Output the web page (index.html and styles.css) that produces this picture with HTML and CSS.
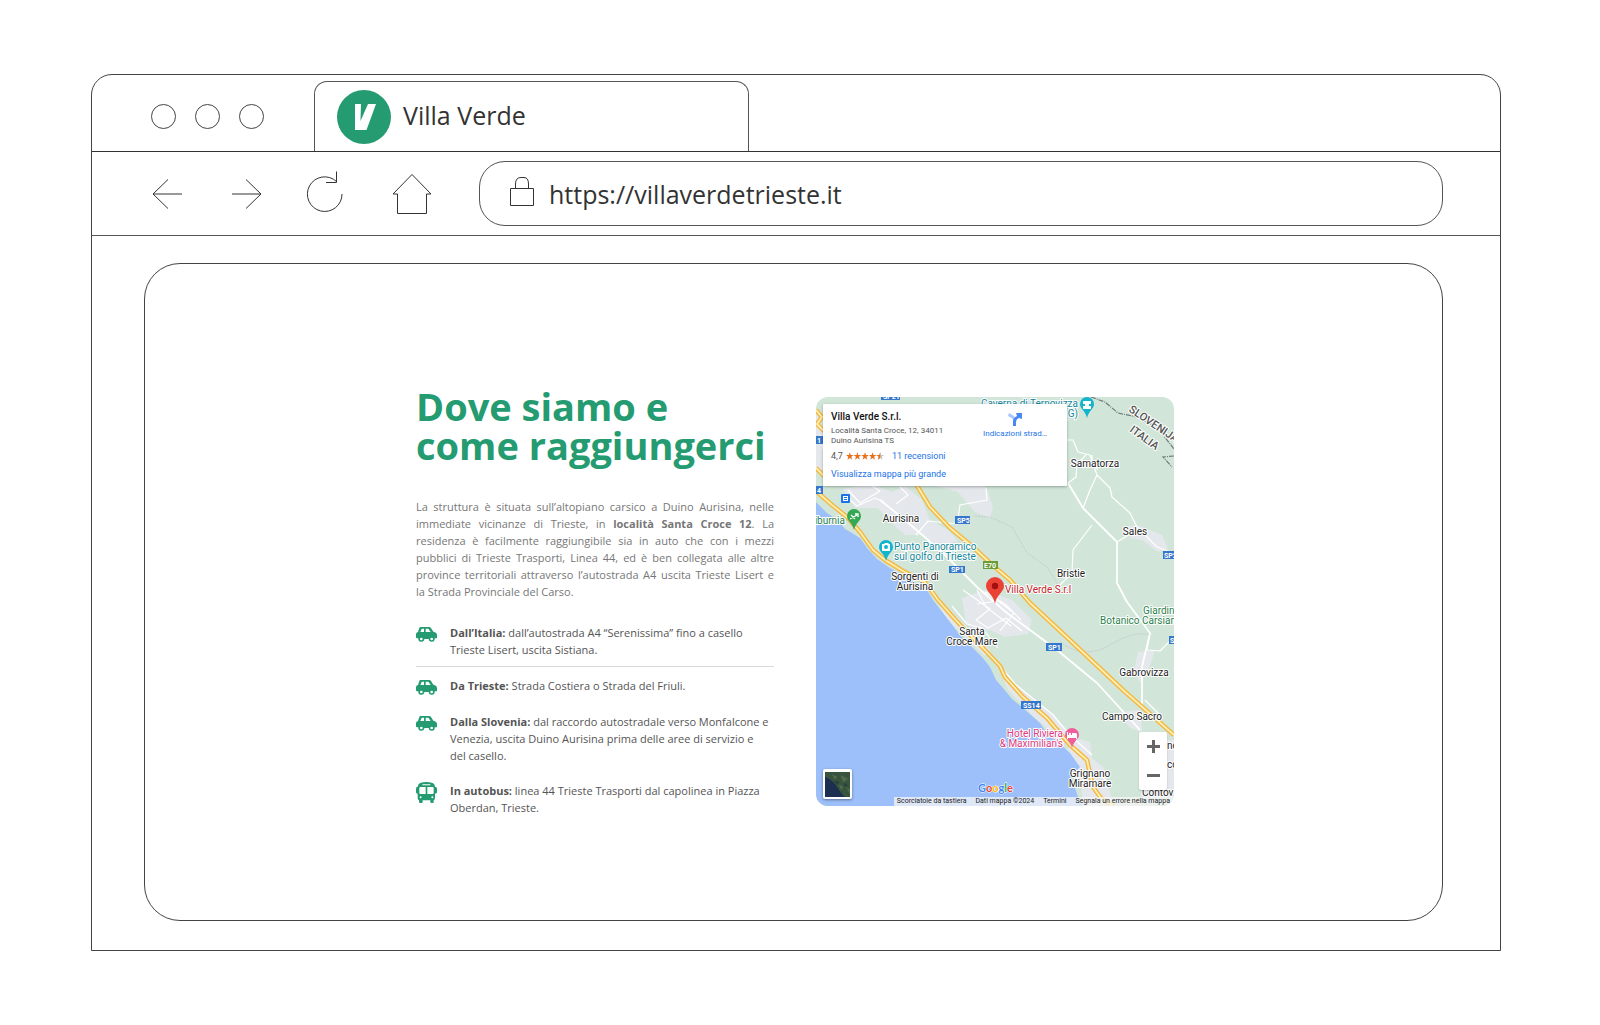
FILE: index.html
```html
<!DOCTYPE html>
<html lang="it">
<head>
<meta charset="utf-8">
<meta name="viewport" content="width=device-width, initial-scale=1">
<title>Villa Verde</title>
<link rel="stylesheet" href="styles.css">
</head>
<body>
<svg class="sprite" aria-hidden="true">
  <symbol id="car" viewBox="0 0 63 45">
    <path fill="#249b70" fill-rule="evenodd" d="M13 0H40Q43 0 45 3L52 14Q63 16 63 24V32Q63 34 60 34H56A9 9 0 1 1 38 36H25A9 9 0 1 1 7 34H3Q0 34 0 31V22Q0 16 6 15L10 3Q11 0 13 0ZM17 5L13 15H24V5ZM29 5V15H44L37 5Z"/>
    <circle cx="16" cy="36" r="4" fill="#fff"/><circle cx="47" cy="36" r="4" fill="#fff"/>
  </symbol>
  <symbol id="bus" viewBox="0 0 63 63">
    <path fill="#249b70" fill-rule="evenodd" d="M12 3Q31-3 50 3Q57 6 57 14Q63 14 63 20V31Q63 35 57 35V48Q57 54 53 55V60Q53 63 50 63H46Q43 63 43 60V55H20V60Q20 63 17 63H12Q9 63 9 60V55Q5 53 5 48V35Q0 35 0 31V20Q0 14 5 14Q6 6 12 3ZM19 7V10H43V7ZM13 15Q10 15 10 18V33Q10 36 13 36H29V15ZM34 15V36H50Q53 36 53 33V18Q53 15 50 15ZM14 43A3 3 0 1 0 14 49A3 3 0 1 0 14 43ZM49 43A3 3 0 1 0 49 49A3 3 0 1 0 49 43Z"/>
  </symbol>
</svg>

<div class="window">
  <header class="tabs">
    <div class="dots"><span class="dot"></span><span class="dot"></span><span class="dot"></span></div>
    <div class="tab">
      <svg class="favicon" viewBox="0 0 54 54" aria-hidden="true"><circle cx="27" cy="27" r="27" fill="#249b70"/><path fill="#fff" d="M18 14H24L23.500 31L31 14H39L29.500 40H18Z"/></svg>
      <span>Villa Verde</span>
    </div>
  </header>

  <nav class="toolbar" aria-label="Navigazione">
    <button class="nav" type="button" aria-label="Indietro"><svg viewBox="0 0 40 48"><path d="M35 24H6M21 9.500L6 24L21 38.500"/></svg></button>
    <button class="nav" type="button" aria-label="Avanti"><svg viewBox="0 0 40 48"><path d="M6 24H35M20 9.500L35 24L20 38.500"/></svg></button>
    <button class="nav" type="button" aria-label="Ricarica"><svg viewBox="0 0 40 48"><path d="M37 24A17.300 17.300 0 1 1 31.500 11.500M31.500 1.500V12.500H21"/></svg></button>
    <button class="nav home" type="button" aria-label="Pagina iniziale"><svg viewBox="0 0 40 48"><path d="M20 4.500L39 24H34.500V43.500H5.500V24H1Z"/></svg></button>
    <label class="address">
      <svg class="lock" viewBox="0 0 26 30" aria-hidden="true"><path d="M1.500 11.500H24.500V28.500H1.500ZM6.500 11V7Q6.500 0.500 12 0.500H15Q19.500 0.500 19.500 7V11"/></svg>
      <input type="text" value="https://villaverdetrieste.it" aria-label="Indirizzo">
    </label>
  </nav>

  <main class="viewport">
    <section class="panel">
      <div class="content">
        <article class="info">
          <h1>Dove siamo e<br>come raggiungerci</h1>
          <p class="intro">La struttura è situata sull’altopiano carsico a Duino Aurisina, nelle<br>immediate vicinanze di Trieste, in <strong>località Santa Croce 12</strong>. La<br>residenza è facilmente raggiungibile sia in auto che con i mezzi<br>pubblici di Trieste Trasporti, Linea 44, ed è ben collegata alle altre<br>province territoriali attraverso l’autostrada A4 uscita Trieste Lisert e<span class="last">la Strada Provinciale del Carso.</span></p>
          <ul class="routes">
            <li class="ruled"><svg class="ico"><use href="#car"/></svg><p><strong>Dall’Italia:</strong> dall’autostrada A4 “Serenissima” fino a casello<br>Trieste Lisert, uscita Sistiana.</p></li>
            <li><svg class="ico"><use href="#car"/></svg><p><strong>Da Trieste:</strong> Strada Costiera o Strada del Friuli.</p></li>
            <li><svg class="ico"><use href="#car"/></svg><p><strong>Dalla Slovenia:</strong> dal raccordo autostradale verso Monfalcone e<br>Venezia, uscita Duino Aurisina prima delle aree di servizio e<br>del casello.</p></li>
            <li><svg class="ico bus"><use href="#bus"/></svg><p><strong>In autobus:</strong> linea 44 Trieste Trasporti dal capolinea in Piazza<br>Oberdan, Trieste.</p></li>
          </ul>
        </article>

        <div class="map">
          <svg class="canvas" viewBox="816 397 358 409" preserveAspectRatio="xMidYMid slice" role="img" aria-label="Mappa di Santa Croce">
            <rect x="816" y="397" width="358" height="410" fill="#d1e6d9"/>
            <!-- built-up areas -->
            <g fill="#e4e7eb">
              <path d="M843 489L872 484L892 492L905 486L922 500L930 520L948 530L958 541L940 546L920 535L905 535L890 522L878 508L855 508Z"/>
              <path d="M930 484H985L993 507L990 518L975 512L958 492Z"/>
              <path d="M816 412L822 424L832 470L816 470Z"/>
              <path d="M962 598L985 590L1012 600L1032 620L1028 634L1005 637L990 630L975 632L966 622Z"/>
              <path d="M936 600L950 610L972 632L990 650L985 656L962 634L946 618Z"/>
              <path d="M1128 526L1140 526L1162 535L1168 549L1158 552L1142 540L1130 538Z"/>
              <path d="M1138 652L1155 650L1148 672L1140 682L1134 670Z"/>
              <path d="M1118 712L1140 710L1142 732L1130 728Z"/>
              <path d="M1074 738L1090 742L1092 758L1104 768L1112 800L1098 806H1084L1078 770L1066 752Z"/>
              <path d="M1000 670L1015 685L1055 715L1075 742L1062 740L1035 718L1008 690Z"/>
              <path d="M1166 740H1174V797H1140L1150 760Z"/>
            </g>
            <!-- sea -->
            <path fill="#9dc0fa" d="M816 502L827 513L838 520L845 529L852 533L860 538L868 549L877 559L890 568L907 577L927 590L933 600L950 622L960 635L973 648L982 657L990 667L996 680L1003 688L1012 699L1023 708L1040 723L1048 735L1057 741L1070 753L1080 767L1071 776L1078 797L1084 807H816Z"/>
            <!-- minor roads -->
            <g fill="none" stroke="#fff" stroke-width="1.200" stroke-linejoin="round">
              <path d="M1068 483L1083 508L1117 542L1117 583L1127 602L1150 633L1142 667V706" stroke-width="1.800"/>
              <path d="M880 500L900 516L920 533L943 553L977 587L1007 613L1057 650L1097 683L1140 730" stroke-width="1.800"/>
              <path d="M1067 440H1073L1078 452L1090 455L1097 475L1090 490L1083 508M1097 475L1110 488L1112 497L1130 513L1137 527L1157 547L1173 553M1117 542L1132 533M1092 525L1073 550L1072 573L1058 587M1086 455L1077 464L1076 477L1068 483M1092 455V461L1098 470M1150 633L1147 650L1160 651L1174 637"/>
              <path d="M843 494L857 506L875 498L884 502M848 490L860 503L880 491L872 486M900 487L908 495L896 504M916 535L928 521L957 524L960 505L987 500L986 488"/>
              <path d="M952 606L967 624L982 628L998 648M963 590L990 609L976 620L988 628L1006 618L1022 631M985 592L1005 604L1021 620M977 604L998 601L1014 613L1000 631M977 590L986 607L1011 626M820 415L832 434M820 435L826 462M995 660L1015 684L1052 714L1070 735L1092 755M1148 748L1165 764L1160 780M1096 770L1108 783M1145 700L1160 715"/>
            </g>
            <path fill="none" stroke="#c6ccd0" stroke-dasharray="2 1" d="M975 516L990 517L1012 527L1027 553L1047 567L1058 585M1060 642Q1085 660 1110 645T1150 635"/>
            <!-- highways -->
            <g fill="none" stroke-linejoin="round">
              <g stroke="#f4b63c" stroke-width="4.500">
                <path d="M816 491L832 505L847 517L860 532L873 550L885 560L903 571L925 582L938 600L953 617L965 630L983 648L1000 666L1005 677L1023 697L1047 718L1070 745L1087 760L1093 787L1101 798L1114 807"/>
                <path d="M916 484L930 507L950 528L973 547L990 563L1010 580L1030 603L1073 643L1123 690L1174 735M816 410L822 417L817 424L828 435M816 468L826 478"/>
              </g>
              <g stroke="#fdeeb4" stroke-width="1.800">
                <path d="M816 491L832 505L847 517L860 532L873 550L885 560L903 571L925 582L938 600L953 617L965 630L983 648L1000 666L1005 677L1023 697L1047 718L1070 745L1087 760L1093 787L1101 798L1114 807"/>
                <path d="M916 484L930 507L950 528L973 547L990 563L1010 580L1030 603L1073 643L1123 690L1174 735M816 410L822 417L817 424L828 435M816 468L826 478"/>
              </g>
            </g>
            <!-- border -->
            <path fill="none" stroke="#6f7c78" stroke-width="1.200" stroke-dasharray="5 1 1 1" d="M1091 397L1105 402L1118 413L1137 417L1157 427L1174 449M1174 456L1163 457L1172 467"/>
            <!-- road shields -->
            <g class="shields">
              <g fill="#3577cc"><rect x="881" y="394" width="19" height="6"/><rect x="816" y="436" width="7" height="8"/><rect x="816" y="486" width="7" height="8"/><rect x="955" y="516" width="15" height="8"/><rect x="949" y="566" width="16" height="7"/><rect x="1046" y="643" width="16" height="8"/><rect x="1021" y="701" width="20" height="8"/><rect x="1163" y="551" width="12" height="8"/><rect x="1169" y="636" width="6" height="8"/></g>
              <rect x="841" y="494" width="9" height="9" rx="1" fill="#1a73e8"/><path stroke="#fff" fill="none" d="M843 496.500H848M843.500 496V501M843 498.500H848M843 500.500H848M847.500 496V501"/>
              <rect x="983" y="561" width="15" height="8" fill="#699b38"/>
              <text x="883" y="399">SP21</text><text x="817" y="443">1</text><text x="817" y="493">4</text><text x="957" y="523">SP5</text><text x="951" y="572">SP1</text><text x="1048" y="650">SP1</text><text x="1023" y="708">SS14</text><text x="1164" y="558">SP2</text><text x="1170" y="643">S</text><text x="984" y="568">E70</text>
            </g>
            <!-- pins -->
            <g>
              <path fill="#34a853" d="M854 530C852 522 847 521 847 516A7 7 0 0 1 861 516C861 521 856 522 854 530Z"/><path stroke="#fff" stroke-width="1.300" fill="none" d="M850 519L857 515M851 515L855 519M855 514H858V517"/>
              <path fill="#12b5cb" d="M886 561C884 553 879 552 879 547A7 7 0 0 1 893 547C893 552 888 553 886 561Z"/><path fill="#fff" fill-rule="evenodd" d="M882 544H884L885 543H888L889 544H890V551H882ZM886 545A2 2 0 1 0 886 549A2 2 0 1 0 886 545Z"/>
              <path fill="#12b5cb" d="M1087 418C1085 410 1080 409 1080 404A7 7 0 0 1 1094 404C1094 409 1089 410 1087 418Z"/><path fill="#fff" d="M1083 401H1091V404H1089V406H1091V409H1083V406H1085V404H1083Z"/>
              <path fill="#ef5f99" d="M1072 748C1070 740 1065 739 1065 735A7 7 0 0 1 1079 735C1079 739 1074 740 1072 748Z"/><path fill="#fff" d="M1067 732H1068V735H1069V733H1071V735H1072V733H1076L1077 734V739H1076V738H1068V739H1067Z"/>
              <path fill="#ea4335" d="M995 604C994 595 986 592 986 586A9 9 0 0 1 1004 586C1004 592 996 595 995 604Z"/><circle cx="995" cy="586" r="3.200" fill="#a50e0e"/>
            </g>
            <!-- place names -->
            <g class="places">
              <text x="901" y="522" text-anchor="middle">Aurisina</text>
              <text x="915" y="580" text-anchor="middle">Sorgenti di</text><text x="915" y="590" text-anchor="middle">Aurisina</text>
              <text x="972" y="635" text-anchor="middle">Santa</text><text x="972" y="645" text-anchor="middle">Croce Mare</text>
              <text x="1095" y="467" text-anchor="middle">Samatorza</text>
              <text x="1135" y="535" text-anchor="middle">Sales</text>
              <text x="1071" y="577" text-anchor="middle">Bristie</text>
              <text x="1144" y="676" text-anchor="middle">Gabrovizza</text>
              <text x="1132" y="720" text-anchor="middle">Campo Sacro</text>
              <text x="1090" y="777" text-anchor="middle">Grignano</text><text x="1090" y="787" text-anchor="middle">Miramare</text>
              <text x="1167" y="749">no</text><text x="1167" y="768">co</text><text x="1142" y="796">Contov</text>
              <g class="teal"><text x="894" y="550">Punto Panoramico</text><text x="894" y="560">sul golfo di Trieste</text><text x="1078" y="407" text-anchor="end">Caverna di Ternovizza</text><text x="1078" y="417" text-anchor="end">(G)</text></g>
              <g class="green"><text x="845" y="524" text-anchor="end">Liburnia</text><text x="1143" y="614">Giardin</text><text x="1100" y="624">Botanico Carsian</text></g>
              <g class="pink"><text x="1063" y="737" text-anchor="end">Hotel Riviera</text><text x="1063" y="747" text-anchor="end">&amp; Maximilian's</text></g>
              <text class="red" x="1005" y="593">Villa Verde S.r.l</text>
              <g class="country"><text transform="translate(1128 411) rotate(34)">SLOVENIJA</text><text transform="translate(1129 431) rotate(36)">ITALIA</text></g>
            </g>
            <text class="google" x="978" y="792"><tspan fill="#4285f4">G</tspan><tspan fill="#ea4335">o</tspan><tspan fill="#fbbc04">o</tspan><tspan fill="#4285f4">g</tspan><tspan fill="#34a853">l</tspan><tspan fill="#ea4335">e</tspan></text>
          </svg>

          <div class="card">
            <div class="place">
              <h2>Villa Verde S.r.l.</h2>
              <p>Località Santa Croce, 12, 34011<br>Duino Aurisina TS</p>
              <div class="rating"><span>4,7</span>
                <svg class="stars" viewBox="0 0 40 8" aria-hidden="true"><defs><path id="star" d="M4 0L5 3H8L5.600 4.800L6.500 8L4 6L1.500 8L2.400 4.800L0 3H3Z"/></defs><g fill="#e7711b"><use href="#star"/><use href="#star" x="8"/><use href="#star" x="16"/><use href="#star" x="24"/></g><use href="#star" x="32" fill="#c4c4c4"/><path fill="#e7711b" d="M36 0V6L33.500 8L34.400 4.800L32 3H35Z"/></svg>
                <a href="#recensioni">11 recensioni</a></div>
              <a href="#mappa">Visualizza mappa più grande</a>
            </div>
            <a class="directions" href="#indicazioni">
              <svg viewBox="0 0 14 14" aria-hidden="true"><path fill="#a8c7fa" d="M1 1L6 4L8 8L6 9Q6 7 0 4Z"/><path fill="#4a89f3" d="M5 14V9Q5 6 9 4L8 1H14V7L11 6Q8 7 8 10V14Z"/></svg>
              <span>Indicazioni strad…</span>
            </a>
          </div>
          <button class="satellite" type="button" aria-label="Satellite"><svg viewBox="0 0 26 26"><path fill="#38533e" d="M0 0H26V26H0Z"/><path fill="#52694b" d="M7 2L13 5L10 8ZM16 3L24 7L19 11ZM14 13L19 15L17 19ZM22 16L26 18V23Z"/><path fill="#273f39" d="M9 9L15 10L13 13ZM20 11L24 14L20 15Z"/><path fill="#1d2f50" d="M0 5Q9 9 13 16T21 26H0Z"/></svg></button>
          <div class="zoom"><button type="button" aria-label="Zoom avanti"><svg viewBox="0 0 13 13"><path d="M0 6.500H13M6.500 0V13"/></svg></button><button type="button" aria-label="Zoom indietro"><svg viewBox="0 0 13 13"><path d="M0 6.500H13"/></svg></button></div>
          <footer class="credits"><button type="button">Scorciatoie da tastiera</button><span>Dati mappa ©2024</span><a href="#termini">Termini</a><a href="#errore">Segnala un errore nella mappa</a></footer>
        </div>
      </div>
    </section>
  </main>
</div>
</body>
</html>
```
FILE: styles.css
```css
* { box-sizing: border-box; }
body {
  margin: 0;
  min-height: 100vh;
  padding: 74px 99px 74px 91px;
  display: flex;
  background: #fff;
  color: #333;
  font-family: "Open Sans", sans-serif;
}
button { border: 0; padding: 0; background: none; font: inherit; color: inherit; }
a { color: #1a73e8; text-decoration: none; }
h1, h2, p, ul { margin: 0; padding: 0; }
svg { display: block; }
.sprite { position: absolute; width: 0; height: 0; }

.window {
  flex: 1;
  display: flex;
  flex-direction: column;
  border: 1px solid #444;
  border-radius: 21px 21px 0 0;
}
.tabs {
  display: flex;
  align-items: flex-end;
  height: 77px;
  padding-left: 59px;
  border-bottom: 1px solid #333;
}
.dots { display: flex; gap: 19px; padding-bottom: 22px; width: 163px; }
.dot { width: 25px; height: 25px; border: 1px solid #444; border-radius: 50%; }
.tab {
  display: flex;
  align-items: center;
  gap: 12px;
  width: 435px;
  height: 70px;
  padding-left: 22px;
  border: 1px solid #555;
  border-bottom: 0;
  border-radius: 13px 13px 0 0;
  font-size: 25px;
  line-height: 32px;
}
.tab span { padding-bottom: 3px; }
.favicon { width: 54px; height: 54px; }

.toolbar {
  display: flex;
  align-items: center;
  gap: 39px;
  height: 84px;
  padding: 0 57px 0 55px;
  border-bottom: 1px solid #555;
}
.nav { width: 40px; height: 48px; }
.nav svg, .lock { fill: none; stroke: #333; stroke-width: 1; }
.home { margin: 0 8px; }
.address {
  flex: 1;
  display: flex;
  align-items: center;
  gap: 14px;
  height: 65px;
  padding: 0 29px;
  border: 1px solid #555;
  border-radius: 26px;
}
.lock { width: 26px; height: 30px; margin-bottom: 4px; }
.address input {
  flex: 1;
  min-width: 0;
  border: 0;
  padding: 0;
  outline: 0;
  background: none;
  color: #333;
  font: 25px "Open Sans", sans-serif;
}

.viewport { flex: 1; display: flex; padding: 27px 57px 29px 52px; }
.panel {
  flex: 1;
  padding: 123px 24px 80px 27px;
  border: 1px solid #444;
  border-radius: 36px;
}
.content {
  display: grid;
  grid-template-columns: 1fr 1fr;
  gap: 42px;
  max-width: 758px;
  margin: 0 auto;
}
h1 { color: #249b70; font-size: 38px; line-height: 39px; font-weight: 700; }
.intro {
  margin-top: 33px;
  color: #777;
  font-size: 11px;
  line-height: 17px;
  text-align: justify;
  text-align-last: justify;
}
.last { display: block; text-align-last: left; }
.routes { margin-top: 24px; list-style: none; color: #555; font-size: 11px; line-height: 17px; }
.routes li { display: flex; gap: 13px; margin-bottom: 18px; }
.routes .ruled { padding-bottom: 8px; margin-bottom: 10px; border-bottom: 1px solid #d9d9d9; }
.ico { flex: none; width: 21px; height: 15px; margin-top: 3px; }
.bus { height: 21px; margin-top: 0; }

.map {
  position: relative;
  height: 409px;
  margin-top: 10px;
  border-radius: 12px;
  overflow: hidden;
  font-family: Roboto, sans-serif;
}
.canvas { width: 100%; height: 100%; }
.shields text { fill: #fff; font: 700 7px Roboto, sans-serif; }
.places { fill: #222; font-size: 10px; stroke: #fff; stroke-width: 2px; stroke-linejoin: round; paint-order: stroke; }
.teal { fill: #12879a; }
.green { fill: #2a7f4c; }
.pink { fill: #e0387c; }
.red { fill: #c5221f; }
.country { fill: #555; font-size: 11px; font-weight: 500; }
.google { font: 700 11px Lato, sans-serif; stroke: #fff; stroke-width: 1px; paint-order: stroke; }

.card {
  position: absolute;
  top: 7px;
  left: 7px;
  display: flex;
  justify-content: space-between;
  width: 244px;
  height: 82px;
  padding: 7px 20px 0 8px;
  background: #fff;
  border-radius: 1px;
  box-shadow: 0 1px 3px rgba(0, 0, 0, .3);
  font-size: 9px;
  line-height: 10px;
  color: #555;
}
.card h2 { font-size: 10px; line-height: 12px; font-weight: 500; color: #111; }
.card p { margin-top: 3px; font-size: 8px; }
.rating { display: flex; align-items: center; gap: 3px; margin: 5px 0 8px; }
.rating a { margin-left: 5px; }
.stars { width: 38px; height: 8px; }
.directions { display: flex; flex-direction: column; align-items: center; gap: 3px; font-size: 8px; }
.directions svg { width: 14px; height: 14px; margin-top: 1px; }

.satellite {
  position: absolute;
  left: 7px;
  bottom: 7px;
  width: 29px;
  height: 30px;
  padding: 2px;
  background: #fff;
  border-radius: 2px;
  box-shadow: 0 1px 3px rgba(0, 0, 0, .4);
}
.zoom {
  position: absolute;
  right: 7px;
  bottom: 16px;
  width: 28px;
  background: #fff;
  border-radius: 2px;
  box-shadow: 0 1px 2px rgba(0, 0, 0, .2);
}
.zoom button { display: grid; place-items: center; width: 28px; height: 29px; }
.zoom svg { width: 13px; height: 13px; stroke: #666; stroke-width: 3; }
.credits {
  position: absolute;
  right: 0;
  bottom: 0;
  display: flex;
  gap: 9px;
  padding: 0 4px 0 3px;
  background: rgba(245, 245, 245, .75);
  font-size: 7px;
  line-height: 9px;
  color: #222;
  white-space: nowrap;
}
.credits a { color: #222; }
```
